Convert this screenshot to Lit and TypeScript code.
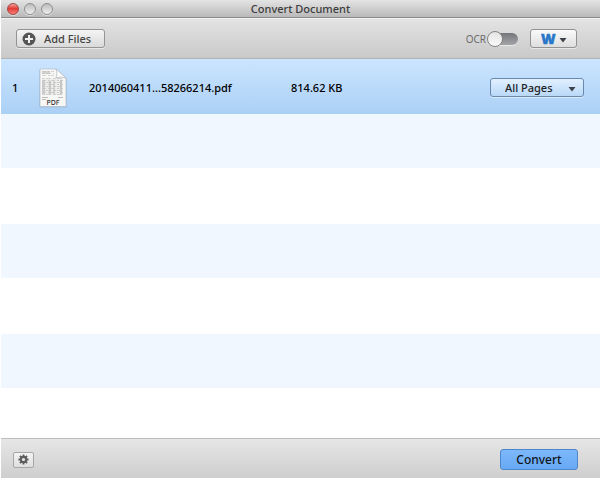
import { LitElement, html, css, svg } from "lit";
import { customElement, property, state } from "lit/decorators.js";

interface QueuedFile {
  name: string;
  size: string;
}

@customElement("pdf-thumb")
class PdfThumb extends LitElement {
  static styles = css`
    :host { display: block; width: 28px; height: 40px; }
    svg { display: block; }
    text { font: 500 7px "Noto Sans", "Open Sans", sans-serif; fill: #333; }
  `;
  render() {
    const lines = [3, 5, 7, 10, 12, 14, 16, 18, 20, 22, 24, 26];
    return html`<svg width="28" height="40" viewBox="0 0 28 40" aria-hidden="true">
      <path d="M.5 2H17L27.500 11V39.300H.5Z" fill="#6d87a3" opacity=".45" />
      <path d="M1 1H17L27 10V38.500H1Z" fill="#f7f7f6" stroke="#b4bcc6" stroke-width=".7" />
      <rect x="3" y="3" width="8" height="3" fill="#d2d2d2" />
      <rect x="3" y="11" width="21" height="16" fill="#ededec" />
      <rect x="3" y="12" width="3" height="14" fill="#d0d0d0" />
      <rect x="10" y="13" width="2" height="13" fill="#c9c9c9" />
      <rect x="14" y="13" width="2" height="13" fill="#d6d6d6" />
      <rect x="21" y="12" width="2" height="14" fill="#c9c9c9" />
      ${lines.map(
        (y, i) => svg`<path d=${`M3 ${y + 0.5}H${i < 3 ? 15 : 24}`} stroke="#c2c2c2"
          stroke-width=".7" stroke-dasharray=${i % 2 ? "3 1 5 2" : "4 2 2 1"} />`
      )}
      <path d="M3 29.500H9M19 29.500H24M3 31.500H7" stroke="#bcbcbc" stroke-width="1" />
      <path d="M17 1Q19 6 17 10Q22 8 27 10Z" fill="#fff" stroke="#aeb4ba" stroke-width=".7" />
      <text x="14" y="37" text-anchor="middle">PDF</text>
    </svg>`;
  }
}

@customElement("menu-select")
class MenuSelect extends LitElement {
  @property() label = "";
  @property({ attribute: false }) options: string[] = [];

  static styles = css`
    :host { display: block; position: relative; }
    select {
      appearance: none;
      display: block;
      box-sizing: border-box;
      width: 100%;
      height: 19px;
      margin: 0;
      padding: 0 24px 0 14px;
      border: 1px solid #929292;
      border-radius: 3px;
      background: linear-gradient(#fafafa, #dedede);
      box-shadow: 0 1px 0 #ffffff80;
      color: #222;
      font: 500 11px/16px "Noto Sans", "Open Sans", sans-serif;
    }
    svg {
      position: absolute;
      right: 8px;
      top: 8px;
      pointer-events: none;
    }
    :host(.format) select {
      padding: 0 20px 0 10px;
      color: #2877c9;
      font: 800 14px/16px "Open Sans", "Noto Sans", sans-serif;
      -webkit-text-stroke: 0.5px #2877c9;
    }
    :host(.format) svg { right: 10px; }
    :host(.pages) select {
      border-color: #6889ad;
      background: linear-gradient(#e2f0ff, #b9d8f7);
    }
  `;
  render() {
    return html`<select aria-label=${this.label}>
        ${this.options.map((o) => html`<option>${o}</option>`)}
      </select>
      <svg width="8" height="6" viewBox="0 0 8 6" aria-hidden="true">
        <path d="M.5 1H7.500L4 5.500Z" fill="#3c4248" />
      </svg>`;
  }
}

@customElement("app-root")
class AppRoot extends LitElement {
  @state() private files: QueuedFile[] = [
    { name: "2014060411...58266214.pdf", size: "814.62 KB" },
  ];

  static styles = css`
    :host {
      display: flex;
      flex-direction: column;
      box-sizing: border-box;
      min-height: 100vh;
      padding: 0 2px 2px 1px;
      background: #fff;
      color: #000;
      font: 11px/16px "Noto Sans", "Open Sans", sans-serif;
    }
    .titlebar {
      display: grid;
      grid-template-columns: 1fr auto 1fr;
      align-items: center;
      box-sizing: border-box;
      height: 18px;
      padding: 0 6px;
      border-bottom: 1px solid #8c8c8c;
      background: linear-gradient(#e4e4e4, #b9b9b9);
    }
    .lights { display: flex; gap: 5px; }
    .light {
      box-sizing: border-box;
      width: 12px;
      height: 12px;
      padding: 0;
      border: 1px solid #8f8f8f;
      border-radius: 50%;
      background: linear-gradient(#bcbcbc, #efefef);
      box-shadow: 0 1px 0 #ffffff80;
    }
    .light.close {
      border-color: #a04848;
      background: linear-gradient(#f2a09a, #e23c36 45%, #f98078);
    }
    h1 { margin: 0; font: inherit; font-weight: 500; color: #3c3c3c; }
    .toolbar {
      display: flex;
      align-items: center;
      box-sizing: border-box;
      height: 41px;
      padding: 0 23px 0 15px;
      border-top: 1px solid #f2f2f2;
      border-bottom: 1px solid #b2b2b2;
      background: linear-gradient(#e3e3e3, #c9c9c9);
    }
    button { margin: 0; font: inherit; }
    .add {
      display: flex;
      align-items: center;
      gap: 8px;
      box-sizing: border-box;
      width: 89px;
      height: 19px;
      padding: 0 5px;
      border: 1px solid #949494;
      border-radius: 3px;
      background: linear-gradient(#f4f4f4, #dadada);
      box-shadow: 0 1px 0 #ffffff80;
      color: #444;
      font-weight: 500;
      white-space: nowrap;
    }
    .ocr {
      display: flex;
      align-items: center;
      gap: 1px;
      margin-left: auto;
      color: #6c6c6c;
      font-size: 10px;
    }
    .switch {
      appearance: none;
      display: flex;
      align-items: center;
      position: relative;
      width: 31px;
      height: 16px;
      margin: 0;
    }
    .switch::before {
      content: "";
      flex: 1;
      height: 12px;
      margin-left: 2px;
      border-radius: 6px;
      background: linear-gradient(#737578, #a3a5a8);
      box-shadow: 0 1px 0 #ffffff80;
    }
    .switch::after {
      content: "";
      position: absolute;
      left: 0;
      top: 0;
      box-sizing: border-box;
      width: 16px;
      height: 16px;
      border: 1px solid #858585;
      border-radius: 50%;
      background: linear-gradient(#e4e4e4, #fafafa);
    }
    .switch:checked::after { left: auto; right: 0; }
    .format { width: 47px; margin-left: 12px; }
    .list {
      flex: 1;
      background: repeating-linear-gradient(#fff 0 55px, #f0f7ff 55px 109px, #fff 109px 110px);
    }
    table { width: 100%; border-collapse: collapse; table-layout: fixed; }
    tr { height: 55px; background: linear-gradient(#cbe5ff, #abd0f5); }
    td { padding: 2px 0 0; font-weight: 500; white-space: nowrap; }
    .index { width: 38px; }
    .index span { padding-left: 11px; }
    .thumb { width: 50px; }
    .name { width: 202px; }
    .range { padding-right: 16px; }
    .pages { width: 94px; margin-left: auto; }
    .footer {
      display: flex;
      align-items: center;
      justify-content: space-between;
      box-sizing: border-box;
      height: 40px;
      padding: 2px 22px 0 12px;
      border-top: 1px solid #bdbdbd;
      background: linear-gradient(#e6e6e6, #cecece);
    }
    .settings {
      display: grid;
      place-items: center;
      box-sizing: border-box;
      width: 21px;
      height: 16px;
      padding: 0;
      border: 1px solid #a6a6a6;
      border-radius: 2px;
      background: linear-gradient(#f4f4f4, #dfdfdf);
    }
    .convert {
      box-sizing: border-box;
      width: 78px;
      height: 21px;
      padding: 0;
      border: 1px solid #4c86cc;
      border-radius: 3px;
      background: linear-gradient(#7db8fb, #67a9f4);
      color: #10151c;
      font-size: 12px;
      font-weight: 500;
      line-height: 18px;
    }
  `;

  render() {
    return html`
      <header class="titlebar">
        <div class="lights">
          <button class="light close" aria-label="Close"></button>
          <button class="light" aria-label="Minimize"></button>
          <button class="light" aria-label="Zoom"></button>
        </div>
        <h1>Convert Document</h1>
      </header>
      <div class="toolbar">
        <button class="add">
          <svg width="14" height="14" viewBox="0 0 14 14" aria-hidden="true">
            <circle cx="7" cy="7" r="6.500" fill="#555" />
            <path d="M7 3V11M3 7H11" stroke="#f2f2f2" stroke-width="2" />
          </svg>
          Add Files
        </button>
        <label class="ocr">OCR<input class="switch" type="checkbox" role="switch" /></label>
        <menu-select class="format" label="Output format" .options=${["W"]}></menu-select>
      </div>
      <main class="list">
        <table aria-label="Files to convert">
          <tbody>
            ${this.files.map(
              (f, i) => html`<tr>
                <td class="index"><span>${i + 1}</span></td>
                <td class="thumb"><pdf-thumb></pdf-thumb></td>
                <td class="name">${f.name}</td>
                <td>${f.size}</td>
                <td class="range">
                  <menu-select class="pages" label="Page range" .options=${["All Pages"]}></menu-select>
                </td>
              </tr>`
            )}
          </tbody>
        </table>
      </main>
      <footer class="footer">
        <button class="settings" aria-label="Settings">
          <svg width="11" height="11" viewBox="0 0 12 12" aria-hidden="true">
            <g stroke="#5c5c5c" stroke-width="2">
              <path d="M6 .5V11.500M.5 6H11.500M2.100 2.100L9.900 9.900M9.900 2.100L2.100 9.900" />
            </g>
            <circle cx="6" cy="6" r="4" fill="#5c5c5c" />
            <circle cx="6" cy="6" r="1.700" fill="#ececec" />
          </svg>
        </button>
        <button class="convert">Convert</button>
      </footer>
    `;
  }
}
